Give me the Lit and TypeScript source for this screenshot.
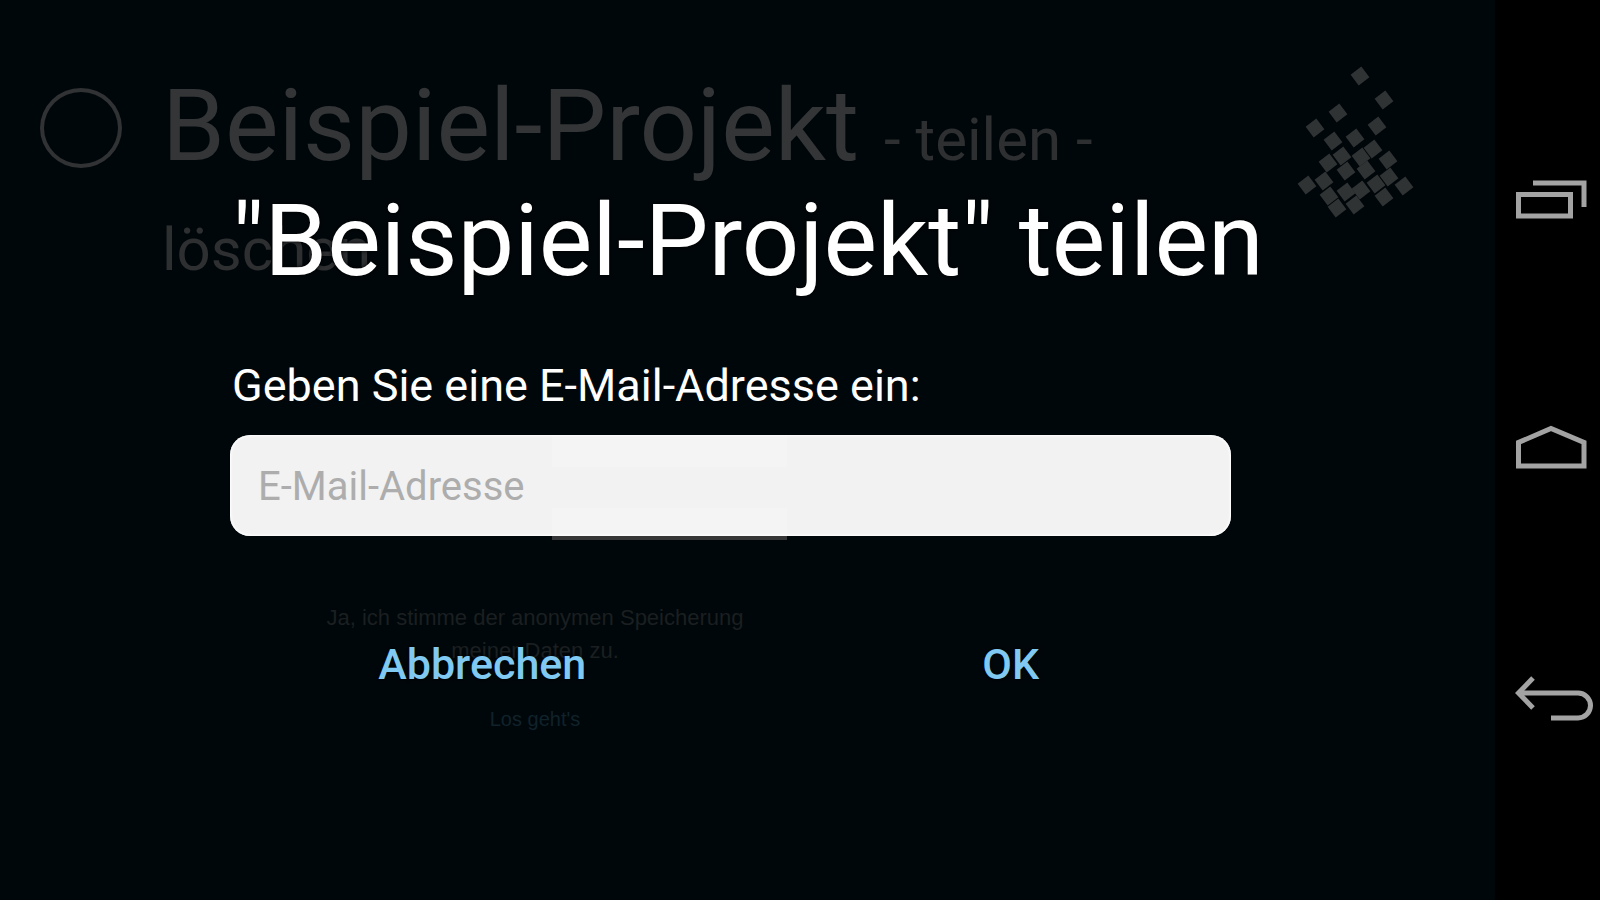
import { LitElement, html, svg, css } from "lit";
import { customElement, state } from "lit/decorators.js";

const TILES: [number, number][] = [
  [90, 26], [114, 50], [68, 63], [45, 78], [107, 76], [63, 91], [85, 88],
  [103, 99], [72, 106], [91, 107], [58, 113], [118, 110], [76, 121],
  [96, 120], [37, 135], [54, 131], [119, 127], [134, 136], [59, 146],
  [76, 142], [91, 140], [106, 134], [114, 147], [67, 158], [85, 155],
];

@customElement("project-page")
export class ProjectPage extends LitElement {
  static styles = css`
    :host { display: block; color: #343536; }
    .head { display: flex; align-items: flex-start; padding: 50px 55px 0 40px; }
    .ring {
      flex: none; box-sizing: border-box; width: 82px; height: 80px;
      margin: 38px 40px 0 0; border: 4px solid #303234; border-radius: 50%;
    }
    .title { flex: 1; margin: 21px 0 0; font-size: 101px; line-height: 110px; font-weight: 400; }
    .action { font-size: 60px; line-height: 60px; color: #2d2f31; text-decoration: none; }
    .logo { flex: none; width: 170px; height: 180px; margin-left: 60px; fill: #303334; }
    .consent {
      width: 424px; margin: 144px 0 0 323px;
      font: 22px/33px "Liberation Sans", Arial, sans-serif;
      text-align: center; color: #1b1f20;
    }
    .field { width: 235px; height: 32px; margin-left: 229px; background: #363636; }
    .field + .field { margin-top: 41px; }
    .text { margin: 61px 0 0; }
    .go { display: block; margin-top: 36px; font-size: 20px; color: #10222b; text-decoration: none; }
  `;

  render() {
    return html`
      <div class="head">
        <span class="ring"></span>
        <h2 class="title">Beispiel-Projekt <span class="action">- teilen - löschen</span></h2>
        <svg class="logo" viewBox="0 0 170 180" aria-hidden="true">
          ${TILES.map(([x, y]) => svg`<rect x="-6.7" y="-6.7" width="13.4" height="13.4" transform="translate(${x} ${y}) rotate(-37)"/>`)}
        </svg>
      </div>
      <div class="consent">
        <div class="field"></div>
        <div class="field"></div>
        <p class="text">Ja, ich stimme der anonymen Speicherung meiner Daten zu.</p>
        <a class="go" href="#start" tabindex="-1">Los geht's</a>
      </div>
    `;
  }
}

@customElement("share-dialog")
export class ShareDialog extends LitElement {
  static styles = css`
    :host { display: block; }
    .dialog { padding: 181px 234px 0 232px; }
    .title {
      margin: 0; font-size: 101px; line-height: 120px; font-weight: 400;
      color: #fff; white-space: nowrap; text-shadow: 0 0 4px #000;
    }
    .label { display: block; margin-top: 58px; font-size: 45px; line-height: 54px; color: #fff; }
    .input {
      display: block; box-sizing: border-box; width: calc(100% - 28px); height: 101px;
      margin: 22px 0 0 -2px; padding: 2px 28px 0; border: 0; border-radius: 20px;
      background: rgba(255, 255, 255, 0.95); box-shadow: inset 0 0 3px 1px #fff;
      font: 40px/48px Roboto, sans-serif; color: #222; outline: none;
    }
    .input::placeholder { color: #adadad; opacity: 1; }
    .buttons { display: grid; grid-template-columns: 1fr 1fr; gap: 28px; margin-top: 103px; }
    .button {
      padding: 0; border: 0; background: none; color: #7fc9f2; cursor: pointer;
      font: 500 43px/50px Roboto, sans-serif; text-shadow: 0 0 4px #000;
    }
  `;

  @state() private mail = "";

  render() {
    return html`
      <form class="dialog" role="dialog" aria-labelledby="title" @submit=${(e: Event) => e.preventDefault()}>
        <h1 class="title" id="title">"Beispiel-Projekt" teilen</h1>
        <label class="label" for="mail">Geben Sie eine E-Mail-Adresse ein:</label>
        <input class="input" id="mail" type="email" placeholder="E-Mail-Adresse" .value=${this.mail}
          @input=${(e: Event) => (this.mail = (e.target as HTMLInputElement).value)} />
        <div class="buttons">
          <button class="button" type="button" @click=${() => (this.mail = "")}>Abbrechen</button>
          <button class="button" type="submit">OK</button>
        </div>
      </form>
    `;
  }
}

@customElement("system-bar")
export class SystemBar extends LitElement {
  static styles = css`
    :host { display: flex; flex-direction: column; align-items: flex-end; justify-content: center; background: #000; }
    .key { display: block; width: 100px; height: 250px; padding: 0; border: 0; background: none; cursor: pointer; }
    .icon { display: block; width: 100px; height: 100px; fill: none; stroke: #a3a3a3; stroke-width: 5; }
  `;

  render() {
    return html`
      <button class="key" aria-label="Letzte Apps">
        <svg class="icon" viewBox="0 0 100 100"><path d="M18.5 44.5H70.5V66H18.5ZM33 33H84V57"/></svg>
      </button>
      <button class="key" aria-label="Startseite">
        <svg class="icon" viewBox="0 0 100 100"><path d="M18.5 66V42.5L51 28.5L84 42.5V66Z"/></svg>
      </button>
      <button class="key" aria-label="Zurück">
        <svg class="icon" viewBox="0 0 100 100"><path d="M19 43H78A12.5 12.5 0 0 1 78 68H51M33 28L18.5 43L33 58"/></svg>
      </button>
    `;
  }
}

@customElement("app-root")
export class AppRoot extends LitElement {
  static styles = css`
    :host {
      display: grid; grid-template-columns: 1fr 105px; min-height: 100vh;
      background: #00070a; font-family: Roboto, sans-serif;
    }
    .stage { position: relative; min-width: 0; }
    .overlay { position: absolute; inset: 0; }
  `;

  render() {
    return html`
      <main class="stage">
        <project-page aria-hidden="true"></project-page>
        <share-dialog class="overlay"></share-dialog>
      </main>
      <system-bar></system-bar>
    `;
  }
}
